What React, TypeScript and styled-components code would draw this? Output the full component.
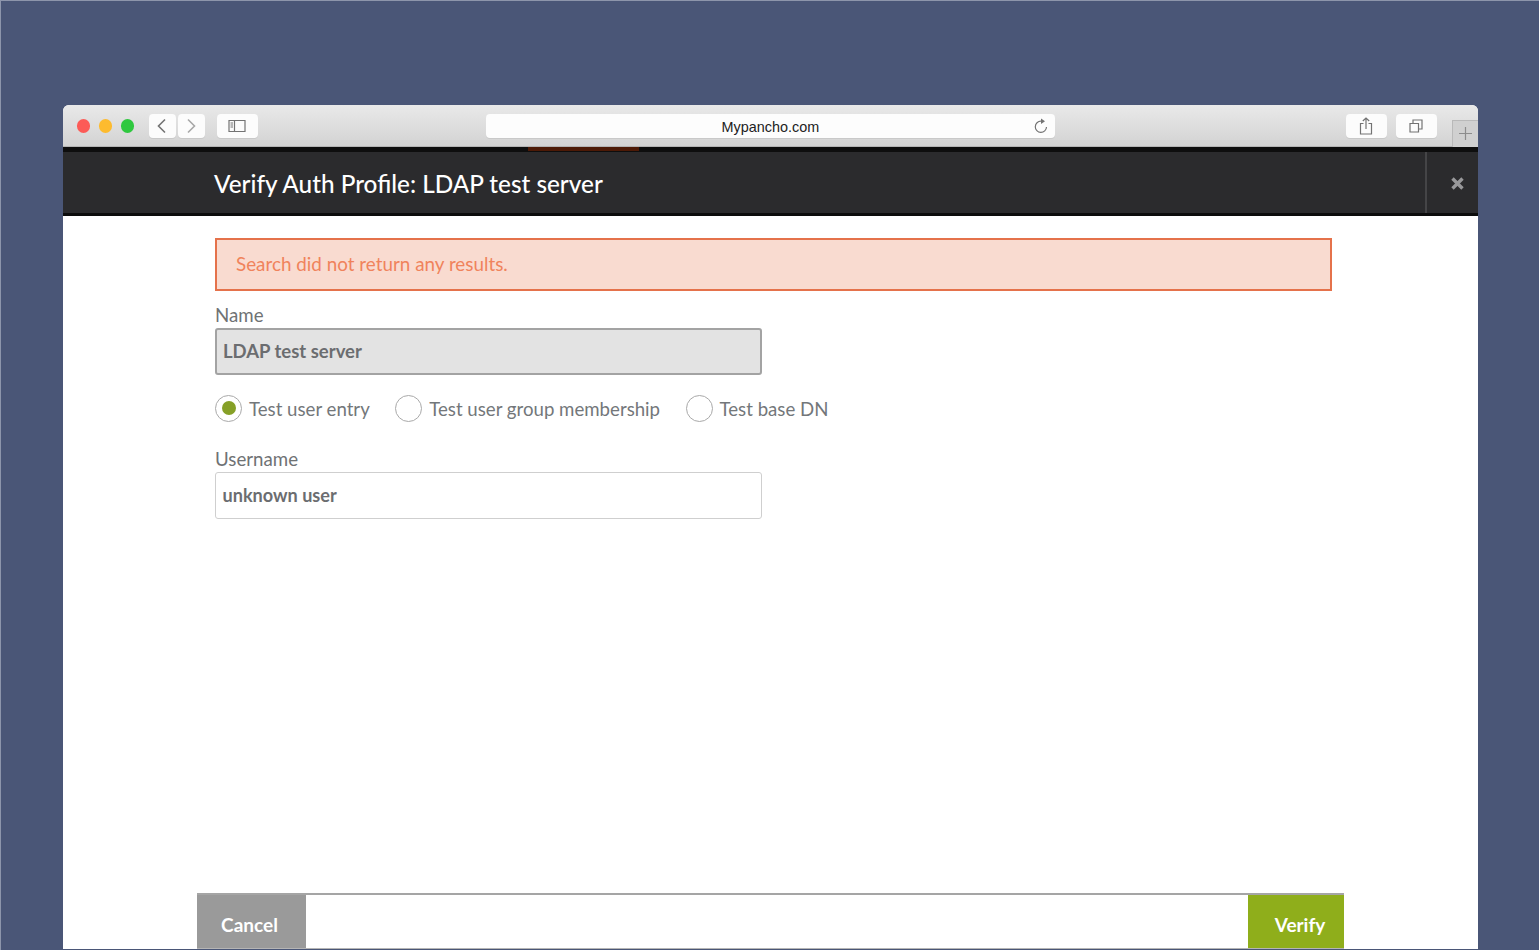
import React from "react";
import styled, { createGlobalStyle } from "styled-components";

const GlobalStyle = createGlobalStyle`
    html, body {
        margin: 0;
        padding: 0;
        height: 100%;
        overflow: hidden;
        background: #4a5677;
    }
    * {
        box-sizing: border-box;
    }
`;

const Page = styled.div`
    height: 950px;
    padding: 105px 61px 0 63px;
    background: #4a5677;
    border-top: 1px solid #8d95ab;
    border-left: 1px solid #8d95ab;
    font-family: Lato, "Open Sans", sans-serif;
    overflow: hidden;
`;

const BrowserWindow = styled.div`
    height: 844px;
    margin-top: -1px;
    margin-left: -1px;
    display: flex;
    flex-direction: column;
    background: #fff;
    border-radius: 6px 6px 0 0;
    overflow: hidden;
`;

const Toolbar = styled.div`
    height: 42px;
    flex: none;
    display: flex;
    align-items: flex-start;
    padding: 9px 0 0 13.5px;
    background: linear-gradient(#e9e9e9, #d3d3d3);
    border-bottom: 1px solid #b4b4b4;
`;

const Lights = styled.div`
    display: flex;
    gap: 8.7px;
    margin: 5px 14.5px 0 0;
`;

const Light = styled.span<{ $color: string }>`
    width: 13.5px;
    height: 13.5px;
    border-radius: 50%;
    background: ${(p) => p.$color};
`;

const ToolButton = styled.div<{ $width: number; $gap?: number }>`
    width: ${(p) => p.$width}px;
    height: 24px;
    flex: none;
    margin-right: ${(p) => p.$gap ?? 0}px;
    display: flex;
    align-items: center;
    justify-content: center;
    background: #fcfcfc;
    border-radius: 4px;
    box-shadow: 0 1px 0 #c9c9c9;
`;

const AddressBar = styled.div`
    width: 569px;
    height: 24px;
    flex: none;
    margin: 0 291px 0 228px;
    position: relative;
    display: flex;
    align-items: center;
    justify-content: center;
    padding-top: 2px;
    background: #fdfdfd;
    border-radius: 4px;
    box-shadow: 0 1px 0 #c9c9c9;
    font-family: "Liberation Sans", Arial, sans-serif;
    font-size: 14.4px;
    color: #222;
`;

const ReloadSlot = styled.span`
    position: absolute;
    right: 6px;
    top: 4px;
    display: flex;
`;

const NewTab = styled.div`
    width: 26px;
    height: 27px;
    flex: none;
    margin: 6px 0 0 15px;
    display: flex;
    align-items: center;
    justify-content: center;
    padding-bottom: 2px;
    background: #d0d0d0;
    border: 1px solid #b9b9b9;
    border-right: none;
    border-bottom: none;
`;

const AppStrip = styled.div`
    height: 5px;
    flex: none;
    padding-left: 465px;
    background: #0e0e0e;
`;

const StripAccent = styled.div`
    width: 111px;
    height: 4px;
    background: #4d1a06;
`;

const DialogHeader = styled.header`
    height: 64px;
    flex: none;
    display: flex;
    background: #2b2b2d;
    border-bottom: 3px solid #0c0c0c;
`;

const DialogTitle = styled.h1`
    flex: 1;
    margin: 0;
    padding: 2px 0 0 151px;
    display: flex;
    align-items: center;
    font-size: 24.3px;
    font-weight: 500;
    color: #fff;
`;

const CloseCell = styled.div`
    width: 53px;
    display: flex;
    align-items: center;
    justify-content: center;
    padding: 1px 0 0 10px;
    border-left: 2px solid #454547;
`;

const DialogBody = styled.main`
    flex: 1;
    display: flex;
    flex-direction: column;
    padding: 22px 146px 0 152px;
    min-height: 0;
`;

const Alert = styled.div`
    height: 53px;
    display: flex;
    align-items: center;
    padding: 0 0 3px 19px;
    background: #f9dbd0;
    border: 2px solid #e5724b;
    font-size: 18.85px;
    color: #f0835c;
`;

const FieldLabel = styled.label`
    display: block;
    height: 23px;
    font-size: 18.7px;
    line-height: 21px;
    color: #6f7274;
`;

const NameLabel = styled(FieldLabel)`
    margin-top: 14px;
`;

const TextInput = styled.div<{ $disabled?: boolean }>`
    width: 547px;
    height: 47px;
    display: flex;
    align-items: center;
    padding: 0 0 2px ${(p) => (p.$disabled ? 6 : 6.5)}px;
    border-radius: 3px;
    border: ${(p) => (p.$disabled ? "2px solid #a3a3a3" : "1.5px solid #cfcfcf")};
    background: ${(p) => (p.$disabled ? "#e3e3e3" : "#fff")};
    font-size: ${(p) => (p.$disabled ? 18.5 : 18.1)}px;
    font-weight: 700;
    color: #6b6d70;
`;

const RadioRow = styled.div`
    display: flex;
    align-items: center;
    height: 28px;
    margin: 19px 0 27px;
`;

const RadioOption = styled.div<{ $gap: number }>`
    display: flex;
    align-items: center;
    gap: 7px;
    margin-right: ${(p) => p.$gap}px;
`;

const RadioText = styled.span`
    padding-top: 2px;
    font-size: 18.65px;
    color: #73777a;
`;

const RadioCircle = styled.span<{ $checked?: boolean }>`
    width: 27px;
    height: 27px;
    flex: none;
    display: flex;
    align-items: center;
    justify-content: center;
    border-radius: 50%;
    border: 1.5px solid #a9a9a9;
    background: #fff;

    &::after {
        content: "";
        display: ${(p) => (p.$checked ? "block" : "none")};
        width: 14px;
        height: 14px;
        border-radius: 50%;
        background: #86a027;
    }
`;

const Footer = styled.footer`
    height: 56px;
    flex: none;
    margin: 0 134px;
    display: flex;
    justify-content: space-between;
    background: #fff;
    border-top: 2px solid #a5a5a5;
    border-bottom: 1px solid #b5b5b5;
`;

const FooterButton = styled.button<{ $width: number; $color: string; $shift: number }>`
    width: ${(p) => p.$width}px;
    border: none;
    padding: 5px 0 0;
    padding-left: ${(p) => Math.max(p.$shift, 0)}px;
    padding-right: ${(p) => Math.max(-p.$shift, 0)}px;
    background: ${(p) => p.$color};
    font-family: Lato, "Open Sans", sans-serif;
    font-size: 19px;
    font-weight: 700;
    color: #fff;
`;

const Glyph = styled.svg`
    display: block;
    fill: none;
    stroke: #737373;
    stroke-width: 1.2;
`;

export default function App() {
    return (
        <Page>
            <GlobalStyle />
            <BrowserWindow>
                <Toolbar>
                    <Lights>
                        <Light $color="#fc5b57" />
                        <Light $color="#fdbb2e" />
                        <Light $color="#2fc83f" />
                    </Lights>
                    <ToolButton $width={27} $gap={2}>
                        <Glyph width="12" height="16" viewBox="0 0 12 16" style={{ strokeWidth: 1.6 }}>
                            <path d="M9 1.5 L2.5 8 L9 14.5" />
                        </Glyph>
                    </ToolButton>
                    <ToolButton $width={27} $gap={12}>
                        <Glyph width="12" height="16" viewBox="0 0 12 16" style={{ stroke: "#a8a8a8", strokeWidth: 1.6 }}>
                            <path d="M3 1.5 L9.5 8 L3 14.5" />
                        </Glyph>
                    </ToolButton>
                    <ToolButton $width={41}>
                        <Glyph width="18" height="14" viewBox="0 0 18 14">
                            <path d="M1 1.5 H17 V12.5 H1 Z M6.5 1.5 V12.5 M2.5 4 H5 M2.5 6 H5 M2.5 8 H5" />
                        </Glyph>
                    </ToolButton>
                    <AddressBar>
                        Mypancho.com
                        <ReloadSlot>
                            <Glyph width="16" height="16" viewBox="0 0 16 16">
                                <path d="M8 3.2 A5.6 5.6 0 1 0 13.5 9" />
                                <path d="M8 0.5 L12 3.2 L8 5.9 Z" style={{ fill: "#737373", stroke: "none" }} />
                            </Glyph>
                        </ReloadSlot>
                    </AddressBar>
                    <ToolButton $width={41} $gap={9}>
                        <Glyph width="14" height="18" viewBox="0 0 14 18">
                            <path d="M4.5 6.5 H1.5 V17 H12.5 V6.5 H9.5 M7 12 V1 M3.8 4 L7 1 L10.2 4" />
                        </Glyph>
                    </ToolButton>
                    <ToolButton $width={41}>
                        <Glyph width="14" height="14" viewBox="0 0 14 14">
                            <path d="M1 4.5 H9.5 V13 H1 Z M4 4.5 V1 H13 V10 H9.5" />
                        </Glyph>
                    </ToolButton>
                    <NewTab>
                        <Glyph width="13" height="13" viewBox="0 0 13 13" style={{ stroke: "#8c8c8c" }}>
                            <path d="M6.5 0 V13 M0 6.5 H13" />
                        </Glyph>
                    </NewTab>
                </Toolbar>
                <AppStrip>
                    <StripAccent />
                </AppStrip>
                <DialogHeader>
                    <DialogTitle>Verify Auth Profile: LDAP test server</DialogTitle>
                    <CloseCell>
                        <Glyph width="13" height="13" viewBox="0 0 13 13" style={{ stroke: "#98989a", strokeWidth: 3.4 }}>
                            <path d="M1.5 1.5 L11.5 11.5 M11.5 1.5 L1.5 11.5" />
                        </Glyph>
                    </CloseCell>
                </DialogHeader>
                <DialogBody>
                    <Alert>Search did not return any results.</Alert>
                    <NameLabel>Name</NameLabel>
                    <TextInput $disabled>LDAP test server</TextInput>
                    <RadioRow>
                        <RadioOption $gap={25.5}>
                            <RadioCircle $checked />
                            <RadioText>Test user entry</RadioText>
                        </RadioOption>
                        <RadioOption $gap={25.5}>
                            <RadioCircle />
                            <RadioText>Test user group membership</RadioText>
                        </RadioOption>
                        <RadioOption $gap={0}>
                            <RadioCircle />
                            <RadioText>Test base DN</RadioText>
                        </RadioOption>
                    </RadioRow>
                    <FieldLabel>Username</FieldLabel>
                    <TextInput>unknown user</TextInput>
                </DialogBody>
                <Footer>
                    <FooterButton $width={109} $color="#9a9a9a" $shift={-4}>Cancel</FooterButton>
                    <FooterButton $width={96} $color="#8fae1b" $shift={8}>Verify</FooterButton>
                </Footer>
            </BrowserWindow>
        </Page>
    );
}
